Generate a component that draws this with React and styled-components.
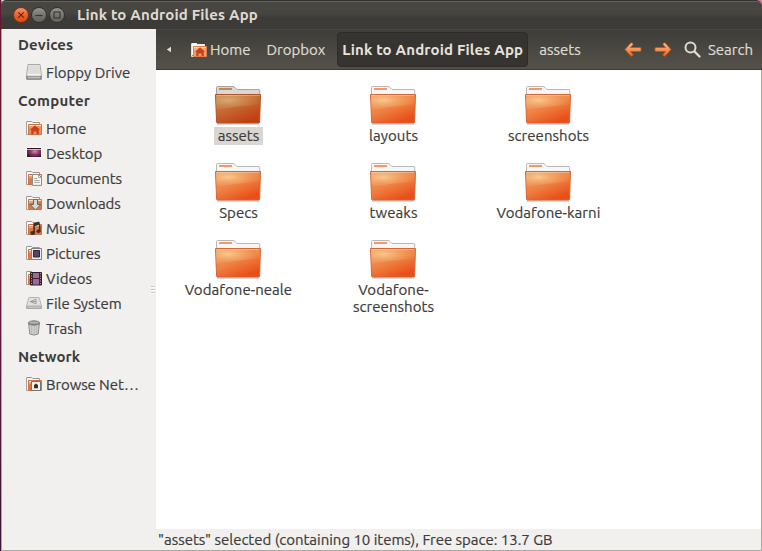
import React from "react";
import styled, { createGlobalStyle } from "styled-components";

const GlobalStyle = createGlobalStyle`
  * { box-sizing: border-box; }
  body {
    margin: 0;
    overflow: hidden;
    font: 15px/17px Ubuntu, "Noto Sans", sans-serif;
    color: #3c3c3c;
    -webkit-text-stroke: 0.2px;
  }
  svg { display: block; flex: none; }
`;

const Desktop = styled.div`
  width: 762px;
  height: 551px;
  padding-left: 1px;
  background: linear-gradient(to bottom, #621832, #6b1f3c 45%, #3c1434);
`;

const Window = styled.div`
  height: 551px;
  display: flex;
  flex-direction: column;
  border: solid #aaa9a2;
  border-width: 0 0 1px 1px;
  background: #f1f0ee;
  position: relative;
`;

const TitleBar = styled.header`
  flex: none;
  height: 29px;
  margin-left: -1px;
  padding-left: 11.5px;
  display: flex;
  align-items: center;
  gap: 2px;
  background: linear-gradient(to bottom, #474641 0, #474641 12px, #3c3b37 17px, #3c3b37);
  border-top: 1px solid #33322e;
  box-shadow: inset 0 1px #64635b;
  border-radius: 5px 5px 0 0;
`;

const Corner = styled.svg`
  position: absolute;
  top: 0;
  right: 0;
`;

const WindowButton = styled.button`
  width: 16px;
  height: 16px;
  margin-top: -1px;
  padding: 0;
  display: grid;
  place-items: center;
  border: 1px solid ${(p) => (p.$close ? "#7c3118" : "#33322f")};
  border-radius: 50%;
  color: ${(p) => (p.$close ? "#5d2413" : "#383733")};
  background: ${(p) =>
    p.$close
      ? "linear-gradient(to bottom, #f79267, #ec5c26 55%, #df4d16)"
      : "linear-gradient(to bottom, #97958c, #73716a 55%, #66645c)"};
`;

const Title = styled.h1`
  margin: -1px 0 0 10.5px;
  font-size: 15px;
  font-weight: 700;
  letter-spacing: 0.16px;
  -webkit-text-stroke: 0;
  color: #dfdbd2;
`;

const Body = styled.div`
  flex: 1;
  min-height: 0;
  display: flex;
`;

const Sidebar = styled.nav`
  width: 154px;
  flex: none;
  display: flex;
  position: relative;
`;

const Places = styled.ul`
  margin: -1px 0 0;
  padding: 0;
  list-style: none;
`;

const Heading = styled.li`
  height: 31px;
  padding: 1px 0 0 16px;
  display: flex;
  align-items: center;
  font-weight: 700;
  letter-spacing: ${(p) => p.$spacing || 0.1}px;
  -webkit-text-stroke: 0;
`;

const Place = styled.li`
  height: 25px;
  padding-left: 24px;
  display: flex;
  align-items: center;
  gap: 4px;
  white-space: nowrap;
`;

const PlaceLabel = styled.span`
  padding-top: 1px;
  letter-spacing: ${(p) => p.$spacing || 0}px;
`;

const Grip = styled.div`
  position: absolute;
  right: 1px;
  top: 257px;
  width: 4px;
  height: 8px;
  background: repeating-linear-gradient(to bottom, #c9c7c3 0, #c9c7c3 1px, #fff 1px, #f1f0ee 3px);
`;

const Main = styled.main`
  flex: 1;
  min-width: 0;
  display: flex;
  flex-direction: column;
`;

const Toolbar = styled.div`
  flex: none;
  height: 41px;
  display: flex;
  align-items: center;
  color: #dfdbd2;
  background: linear-gradient(to bottom, #3e3d39, #55524a);
  border-top: 1px solid #474641;
  border-bottom: 1px solid #3e3b36;
  white-space: nowrap;
`;

const ScrollLeft = styled.div`
  width: 35px;
  padding-left: 10px;
`;

const Crumb = styled.div`
  height: 35px;
  padding: 0 ${(p) => p.$right || 0}px 0 ${(p) => p.$left || 0}px;
  display: flex;
  align-items: center;
  gap: 3px;
`;

const CurrentCrumb = styled(Crumb)`
  width: 191px;
  justify-content: center;
  font-weight: 700;
  letter-spacing: 0.16px;
  -webkit-text-stroke: 0;
  color: #e6e3dc;
  border: 1px solid #2d2c29;
  border-radius: 4px;
  background: #353430;
`;

const Tools = styled.div`
  margin-left: auto;
  padding-right: 9px;
  display: flex;
  align-items: center;
  gap: 12px;
`;

const SearchButton = styled.div`
  display: flex;
  align-items: center;
  gap: 7px;
`;

const Canvas = styled.section`
  flex: 1;
  padding: 12px 0 0 4px;
  display: grid;
  grid-template-columns: repeat(3, 155px);
  grid-auto-rows: 77px;
  background: #fff;
  border-right: 1px solid #aaa9a2;
`;

const Item = styled.div`
  display: flex;
  flex-direction: column;
  align-items: center;
  text-align: center;
`;

const ItemLabel = styled.div`
  margin-left: 2px;
  width: ${(p) => p.$width || "auto"};
  padding: 0 3px;
  letter-spacing: 0.05px;
`;

const SelectedLabel = styled(ItemLabel)`
  width: 49px;
  height: 18px;
  background: #dad7d3;
`;

const StatusBar = styled.footer`
  flex: none;
  height: 21px;
  padding: 2px 0 0 2px;
  letter-spacing: -0.02px;
  border-right: 1px solid #aaa9a2;
`;

function Glyph({ kind }) {
  return (
    <svg width="8" height="8" viewBox="0 0 8 8" fill="none" stroke="currentColor" strokeWidth="1.1">
      {kind === "close" && <path d="M1.3 1.3 6.7 6.7M6.7 1.3 1.3 6.7" />}
      {kind === "min" && <path d="M.5 4.5h7" />}
      {kind === "max" && <rect x="1" y="1" width="6" height="6" />}
    </svg>
  );
}

function BigFolder({ selected }) {
  const id = selected ? "sel" : "std";
  return (
    <svg width="48" height="45" viewBox="214 82 48 45">
      <defs>
        <linearGradient id={id + "b"} x1="0" y1="0" x2=".6" y2="1">
          <stop offset="0" stopColor={selected ? "#c98a52" : "#f0a066"} />
          <stop offset=".55" stopColor={selected ? "#c4662f" : "#ee8142"} />
          <stop offset="1" stopColor={selected ? "#c23f12" : "#e94f18"} />
        </linearGradient>
        <radialGradient id={id + "h"} cx=".28" cy=".35" r=".75">
          <stop offset="0" stopColor={selected ? "#d9b47e" : "#fbd298"} stopOpacity=".85" />
          <stop offset="1" stopColor={selected ? "#cf8a50" : "#f0a060"} stopOpacity=".1" />
        </radialGradient>
      </defs>
      <path d="M217 124h42" stroke="#000" strokeOpacity=".2" strokeWidth="1.5" />
      <path
        d="M216.5 95V87.5q0-1 1-1H233q1 0 2 1l2 2h22q.7 0 .7.7V95z"
        fill={selected ? "#d8d7d4" : "#f6f6f5"}
        stroke={selected ? "#a5a4a1" : "#b9b9b7"}
      />
      <path d="M220 89h11" stroke={selected ? "#cd8352" : "#f19a68"} strokeWidth="2" strokeLinecap="square" />
      <path
        d="M215.5 94.5h45l-.9 27.5q0 1-1 1h-41q-1 0-1-1z"
        fill={`url(#${id}b)`}
        stroke={selected ? "#b05228" : "#d4673a"}
      />
      <path d="M216 95h44l-.4 9.5Q239 106 216.3 110z" fill={`url(#${id}h)`} />
      <path d="M216.5 95.5h43" stroke="#fff" strokeOpacity=".3" />
    </svg>
  );
}

function FolderIcon({ kind, pale }) {
  return (
    <svg width="16" height="16" viewBox="0 0 16 16">
      <path d="M.5 14V2q0-.5.5-.5h4.7l1 1h6.8v3" fill="#fafaf8" stroke={pale ? "#efede8" : "#999690"} />
      <path d="M.5 2v12.5H3" fill="none" stroke={pale ? "#e8ded2" : "#a7a39d"} />
      <path d="M2.5 4.5h13v10h-13z" fill={pale ? "#f3b57f" : "#eda16b"} stroke={pale ? "#e57b46" : "#c8754b"} />
      <path d="M3 8.5 15 6v8H3z" fill="#df602a" opacity={kind === "home" ? ".25" : ".65"} />
      <path d="M3 5.5h12" stroke="#fae0c4" />
      {kind === "home" && (
        <path d="M9 5.2 14 9.7h-1.2V14h-2.3v-2.6h-3V14H5.3V9.7H4z" fill="#c9401a" />
      )}
      {kind === "documents" && (
        <g>
          <path d="M6.5 4.5h6l3 3v7.9h-9z" fill="#f5f5f2" stroke="#8d8d88" />
          <path d="M12.5 4.5v3h3M8.3 8.5h3M8.3 10.5h5.5M8.3 12.5h5.5" fill="none" stroke="#a0a19c" strokeWidth=".9" />
        </g>
      )}
      {kind === "downloads" && (
        <path d="M7.5 4.5h4v5h3.3L9.5 15 4.2 9.5h3.3z" fill="#d6d8d5" stroke="#666965" />
      )}
      {kind === "music" && (
        <g fill="#37342f">
          <path d="M7.3 3.2 13 1.5q.6 3 1.5 4v6h-1.6V4.8l-4 1.4V13H7.3z" />
          <ellipse cx="6.7" cy="13" rx="2.4" ry="1.9" />
          <ellipse cx="12.5" cy="11.2" rx="2.1" ry="1.7" />
        </g>
      )}
      {kind === "pictures" && (
        <g>
          <path d="M5.5 3.5h10v11h-10z" fill="#eeeeec" stroke="#85827e" />
          <path d="M7.5 5.5h6v6.5h-6z" fill="#59436b" stroke="#2e2832" />
        </g>
      )}
      {kind === "videos" && (
        <g>
          <path d="M4.5 2.5h11v12.5h-11z" fill="#3a2531" stroke="#2c2025" />
          <path d="M7 3h6v5H7zM7 9h6v5.5H7z" fill="#9a6a9d" />
          <path d="M5.5 3v12M14.5 3v12" stroke="#c9a29e" strokeDasharray="1 1.5" />
        </g>
      )}
      {kind === "network" && (
        <g>
          <path d="M5.5 5.5h9v9h-9z" fill="#f0f0ec" stroke="#74736c" />
          <path d="M10 7.5 12 9v3.2H8V9z" fill="#33332f" />
        </g>
      )}
    </svg>
  );
}

function PlaceIcon({ kind }) {
  if (kind === "floppy")
    return (
      <svg width="16" height="16" viewBox="0 0 16 16">
        <path d="M2 .5h12l1.5 11v3.9H.5v-3.9z" fill="#e9e9e7" stroke="#aaa9a6" />
        <path d="M2.5 1.5h11l1 8.5h-13z" fill="#dedddb" />
        <path d="M1 12h14v3H1z" fill="#bdbcb9" stroke="#72716d" strokeWidth=".8" />
        <path d="M1.5 11h13" stroke="#fff" />
      </svg>
    );
  if (kind === "desktop")
    return (
      <svg width="16" height="16" viewBox="0 0 16 16">
        <defs>
          <radialGradient id="desk" cx=".55" cy=".4" r=".65">
            <stop offset="0" stopColor="#d58ab0" />
            <stop offset=".5" stopColor="#82365f" />
            <stop offset="1" stopColor="#371029" />
          </radialGradient>
        </defs>
        <path d="M.5 2.5h15v10H.5z" fill="url(#desk)" stroke="#fff" />
        <path d="M1 3.5h14" stroke="#2b1020" />
        <path d="M1 4.5h14" stroke="#f0d9e4" strokeWidth=".8" />
      </svg>
    );
  if (kind === "disk")
    return (
      <svg width="16" height="16" viewBox="0 0 16 16">
        <path d="M3 2.5h10l2.5 8v3H.5v-3z" fill="#e1e0de" stroke="#b5b4b0" />
        <path d="M1 11h14v2.5H1z" fill="#c6c5c1" stroke="#a09f9b" strokeWidth=".7" />
        <path d="M4.3 6.6h6M4.3 6.6 10 4.3v4.5z" fill="none" stroke="#9a9995" strokeWidth=".9" />
      </svg>
    );
  if (kind === "trash")
    return (
      <svg width="16" height="16" viewBox="0 0 16 16">
        <path d="M2.7 4 3.8 14q4.2 2.2 8.4 0L13.3 4z" fill="#d0d1cf" stroke="#898b88" />
        <path d="M5.7 6v7.5M8.3 6v8M10.7 6v7.5" stroke="#b6b8b5" />
        <ellipse cx="8" cy="3" rx="5.8" ry="2.2" fill="#777a77" stroke="#858784" />
        <ellipse cx="8" cy="2.6" rx="5" ry="1.2" fill="#b4b6b3" />
      </svg>
    );
  return <FolderIcon kind={kind} />;
}

function Arrow({ flip }) {
  return (
    <svg width="18" height="16" viewBox="0 0 18 16">
      <defs>
        <linearGradient id="arrow" x1="0" y1="0" x2="0" y2="1">
          <stop offset="0" stopColor="#fbc28d" />
          <stop offset=".55" stopColor="#f58f4d" />
          <stop offset="1" stopColor="#ee6324" />
        </linearGradient>
      </defs>
      <g transform={flip ? "translate(18 -1) scale(-1 1)" : "translate(0 -1)"}>
        <path
          d="M1 8.5 6.7 2.1Q8.5 1.1 9 3V3.5L6.5 6.5H16q1.2 0 1.2 2T16 10.5H6.5L9 13.5v.6Q8.5 15.9 6.7 14.9z"
          fill="url(#arrow)"
          stroke="#c24e1c"
          strokeWidth=".8"
          strokeLinejoin="round"
        />
      </g>
    </svg>
  );
}

const sections = [
  { title: "Devices", places: [["floppy", "Floppy Drive"]] },
  {
    title: "Computer",
    spacing: 0.25,
    places: [
      ["home", "Home"],
      ["desktop", "Desktop"],
      ["documents", "Documents", -0.15],
      ["downloads", "Downloads", -0.05],
      ["music", "Music"],
      ["pictures", "Pictures"],
      ["videos", "Videos"],
      ["disk", "File System"],
      ["trash", "Trash"],
    ],
  },
  { title: "Network", spacing: 0.1, places: [["network", "Browse Net…", -0.1]] },
];

const folders = [
  "assets",
  "layouts",
  "screenshots",
  "Specs",
  "tweaks",
  "Vodafone-karni",
  "Vodafone-neale",
  "Vodafone-screenshots",
];

export default function App() {
  return (
    <Desktop>
      <GlobalStyle />
      <Window>
        <TitleBar>
          <WindowButton $close aria-label="Close"><Glyph kind="close" /></WindowButton>
          <WindowButton aria-label="Minimize"><Glyph kind="min" /></WindowButton>
          <WindowButton aria-label="Maximize"><Glyph kind="max" /></WindowButton>
          <Title>Link to Android Files App</Title>
        </TitleBar>
        <Corner width="5" height="5" viewBox="0 0 5 5">
          <path d="M0 0h5v5Q4 1 0 0z" fill="#d77a9c" />
        </Corner>
        <Body>
          <Sidebar>
            <Places>
              {sections.map((s) => (
                <React.Fragment key={s.title}>
                  <Heading $spacing={s.spacing}>{s.title}</Heading>
                  {s.places.map(([kind, name, spacing]) => (
                    <Place key={name}>
                      <PlaceIcon kind={kind} />
                      <PlaceLabel $spacing={spacing}>{name}</PlaceLabel>
                    </Place>
                  ))}
                </React.Fragment>
              ))}
            </Places>
            <Grip />
          </Sidebar>
          <Main>
            <Toolbar>
              <ScrollLeft>
                <svg width="6" height="7" viewBox="0 0 6 7"><path d="M5 .7v5.6L.8 3.5z" fill="#dfdbd2" /></svg>
              </ScrollLeft>
              <Crumb><FolderIcon kind="home" pale />Home</Crumb>
              <Crumb $left={16} $right={12}>Dropbox</Crumb>
              <CurrentCrumb>Link to Android Files App</CurrentCrumb>
              <Crumb $left={11}>assets</Crumb>
              <Tools>
                <Arrow />
                <Arrow flip />
                <SearchButton>
                  <svg width="17" height="17" viewBox="0 0 17 17" fill="none" stroke="#dfdbd2">
                    <circle cx="6.5" cy="6.5" r="5" strokeWidth="2" />
                    <path d="m10.5 10.5 5 5" strokeWidth="2.4" strokeLinecap="round" />
                  </svg>
                  Search
                </SearchButton>
              </Tools>
            </Toolbar>
            <Canvas>
              {folders.map((name, i) => {
                const Label = i === 0 ? SelectedLabel : ItemLabel;
                return (
                  <Item key={name}>
                    <BigFolder selected={i === 0} />
                    <Label $width={name === "Vodafone-screenshots" ? "110px" : undefined}>{name}</Label>
                  </Item>
                );
              })}
            </Canvas>
            <StatusBar>"assets" selected (containing 10 items), Free space: 13.7 GB</StatusBar>
          </Main>
        </Body>
      </Window>
    </Desktop>
  );
}
